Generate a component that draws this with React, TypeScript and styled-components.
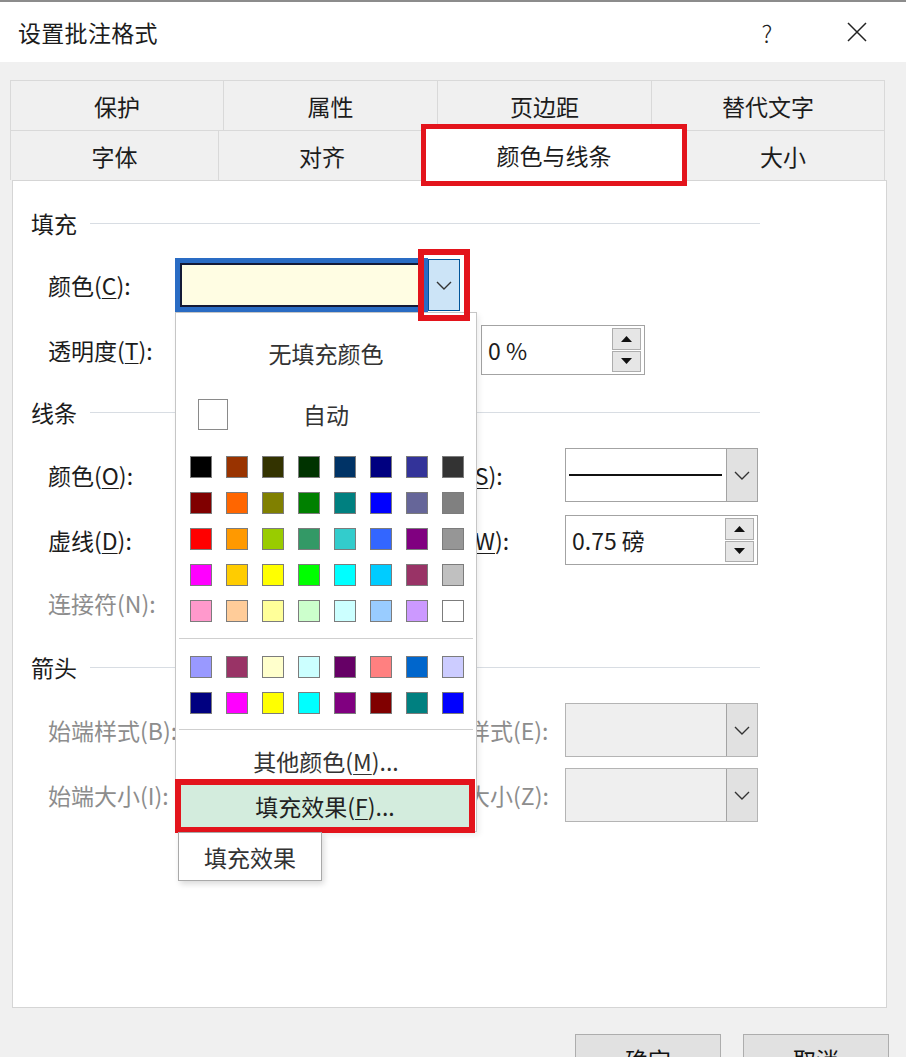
import styled, { createGlobalStyle } from "styled-components";

const GlobalStyle = createGlobalStyle`
  html, body {
    margin: 0;
    padding: 0;
    background: #f0f0f0;
    overflow: hidden;
  }
  * {
    box-sizing: border-box;
  }
  body {
    font-family: "Noto Sans CJK SC", "Noto Sans", sans-serif;
    color: #1c1c1c;
  }
`;

const Window = styled.div`
  width: 906px;
  height: 1057px;
  overflow: hidden;
  background: #f0f0f0;
  border-top: 2px solid #8c8c8c;
`;

const TitleBar = styled.div`
  height: 60px;
  background: #fff;
  display: flex;
  align-items: center;
  padding: 0 19px 0 18px;
  font-size: 23px;
`;

const TitleText = styled.div`
  flex: 1;
  letter-spacing: 0.3px;
`;

const TitleButton = styled.div<{ $w: number }>`
  width: ${(p) => p.$w}px;
  height: 44px;
  display: flex;
  align-items: center;
  justify-content: center;
  font-size: 24px;
  font-weight: 300;
  color: #222;
`;

const Body = styled.div`
  padding: 18px 0 0 10px;
`;

const TabRow = styled.div`
  display: flex;
  height: 50px;
  width: 875px;
`;

const Tab = styled.div<{ $w: number; $active?: boolean }>`
  width: ${(p) => p.$w}px;
  display: flex;
  align-items: center;
  justify-content: center;
  font-size: 23px;
  border-top: 1px solid #d9d9d9;
  border-right: 1px solid #d9d9d9;
  &:first-child {
    border-left: 1px solid #d9d9d9;
  }
  ${(p) =>
    p.$active &&
    `
    position: relative;
    z-index: 3;
    background: #fff;
    height: 52px;
    margin-top: -1px;
    border: none;
    outline: 5px solid #e3141c;
  `}
`;

const Panel = styled.div`
  position: relative;
  margin-left: 2px;
  width: 875px;
  height: 828px;
  background: #fff;
  border: 1px solid #d5d5d5;
  padding-left: 18px;
`;

const Header = styled.div<{ $mt: number }>`
  margin-top: ${(p) => p.$mt}px;
  width: 729px;
  height: 30px;
  display: flex;
  align-items: center;
  font-size: 23px;
`;

const Rule = styled.div`
  flex: 1;
  height: 1px;
  margin-left: 13px;
  background: #d8dde3;
`;

const Row = styled.div<{ $mt: number }>`
  margin-top: ${(p) => p.$mt}px;
  height: 54px;
  display: flex;
  align-items: center;
  padding-left: 17px;
`;

const Label = styled.div<{ $w: number; $muted?: boolean }>`
  width: ${(p) => p.$w}px;
  flex: none;
  font-size: 23px;
  white-space: nowrap;
  color: ${(p) => (p.$muted ? "#8d8d8d" : "#1c1c1c")};
`;

const Key = styled.span`
  text-decoration: underline;
  text-underline-offset: 3px;
  text-decoration-thickness: 1px;
`;

const Spacer = styled.div<{ $w: number }>`
  width: ${(p) => p.$w}px;
  flex: none;
`;

/* ---------- fill colour combo ---------- */

const ComboWrap = styled.div`
  position: relative;
  display: flex;
  align-items: stretch;
  height: 54px;
`;

const FocusField = styled.div`
  width: 253px;
  background: #2a6cc4;
  padding: 5px;
  display: flex;
`;

const FieldInner = styled.div`
  flex: 1;
  border: 2px solid #141a36;
  background: #fffde3;
`;

const DropBtn = styled.div`
  width: 32px;
  margin: 1px 0 1px 0;
  background: #cce4f7;
  border: 1px solid #005499;
  display: flex;
  align-items: center;
  justify-content: center;
  outline: 6px solid #e3141c;
  outline-offset: 4px;
  position: relative;
  z-index: 6;
`;

/* ---------- popup palette ---------- */

const Popup = styled.div`
  position: absolute;
  top: 100%;
  left: 0;
  width: 302px;
  z-index: 5;
  background: #fff;
  border: 1px solid #c6c6c6;
  padding: 8px 0 4px;
  box-shadow: 2px 3px 6px rgba(0, 0, 0, 0.08);
`;

const MenuText = styled.div<{ $h: number; $pt?: number }>`
  height: ${(p) => p.$h}px;
  padding-top: ${(p) => p.$pt ?? 0}px;
  display: flex;
  align-items: center;
  justify-content: center;
  font-size: 23px;
  color: #333;
  white-space: nowrap;
`;

const AutoRow = styled.div`
  height: 58px;
  display: flex;
  align-items: center;
  padding-left: 22px;
`;

const AutoBox = styled.div`
  width: 30px;
  height: 31px;
  border: 1px solid #8a8a8a;
  background: #fff;
`;

const AutoText = styled.div`
  flex: 1;
  text-align: center;
  padding-right: 52px;
  font-size: 23px;
  color: #333;
`;

const Palette = styled.div<{ $mt: number }>`
  margin-top: ${(p) => p.$mt}px;
  padding-left: 7px;
  display: grid;
  grid-template-columns: repeat(8, 36px);
  grid-auto-rows: 36px;
`;

const Cell = styled.div`
  display: flex;
  align-items: center;
  justify-content: center;
`;

const Swatch = styled.div`
  width: 22px;
  height: 22px;
  border: 1px solid #7c7c7c;
`;

const MenuSep = styled.div<{ $mt: number }>`
  margin: ${(p) => p.$mt}px 3px 0;
  height: 1px;
  background: #cfcfcf;
`;

const FillEffects = styled.div`
  margin: 0 7px 0 5px;
  height: 42px;
  background: #d3ecdd;
  outline: 6px solid #e3141c;
  display: flex;
  align-items: center;
  justify-content: center;
  font-size: 23px;
  color: #222;
`;

const Tooltip = styled.div`
  position: absolute;
  top: calc(100% + 1px);
  left: 2px;
  width: 144px;
  height: 49px;
  background: #fff;
  border: 1px solid #a9a9a9;
  box-shadow: 2px 3px 6px rgba(0, 0, 0, 0.15);
  display: flex;
  align-items: center;
  justify-content: center;
  font-size: 23px;
  color: #333;
`;

/* ---------- spinners and combos ---------- */

const Spin = styled.div<{ $w: number }>`
  width: ${(p) => p.$w}px;
  height: 50px;
  border: 1px solid #a3a3a3;
  background: #fff;
  display: flex;
  align-items: center;
  padding: 2px 3px 2px 6px;
  font-family: "Noto Sans", "Noto Sans CJK SC", sans-serif;
`;

const SpinValue = styled.div`
  flex: 1;
  font-size: 23px;
  color: #1c1c1c;
  font-family: "Noto Sans CJK SC", sans-serif;
`;

const SpinBtns = styled.div`
  width: 29px;
  height: 100%;
  display: flex;
  flex-direction: column;
  gap: 1px;
`;

const SpinBtn = styled.div`
  flex: 1;
  background: #e6e6e6;
  border: 1px solid #adadad;
  display: flex;
  align-items: center;
  justify-content: center;
`;

const Combo = styled.div<{ $disabled?: boolean }>`
  width: 193px;
  height: 54px;
  border: 1px solid ${(p) => (p.$disabled ? "#b4b4b4" : "#a3a3a3")};
  background: ${(p) => (p.$disabled ? "#efefef" : "#fff")};
  display: flex;
`;

const ComboField = styled.div`
  flex: 1;
  display: flex;
  align-items: center;
  padding: 0 4px 0 3px;
`;

const LineSample = styled.div`
  flex: 1;
  height: 2px;
  background: #111;
`;

const ComboBtn = styled.div`
  width: 31px;
  background: #e1e1e1;
  border-left: 1px solid #a3a3a3;
  display: flex;
  align-items: center;
  justify-content: center;
`;

/* ---------- footer ---------- */

const Footer = styled.div`
  display: flex;
  justify-content: flex-end;
  gap: 22px;
  padding: 26px 17px 0 0;
`;

const Button = styled.div`
  width: 146px;
  height: 50px;
  background: #e1e1e1;
  border: 1px solid #adadad;
  display: flex;
  align-items: center;
  justify-content: center;
  font-size: 23px;
  color: #111;
`;

/* ---------- icons ---------- */

const Chevron = () => (
  <svg width="16" height="9" viewBox="0 0 16 9">
    <polyline points="1,1 8,8 15,1" fill="none" stroke="#333" strokeWidth="1.4" />
  </svg>
);

const Tri = ({ up }: { up?: boolean }) => (
  <svg width="11" height="6" viewBox="0 0 11 6">
    <polygon points={up ? "0,6 5.5,0 11,6" : "0,0 5.5,6 11,0"} fill="#111" />
  </svg>
);

const CloseIcon = () => (
  <svg width="20" height="20" viewBox="0 0 20 20">
    <path d="M1 1 L19 19 M19 1 L1 19" stroke="#222" strokeWidth="1.5" fill="none" />
  </svg>
);

const mainColors = [
  "#000000", "#993300", "#333300", "#003300", "#003366", "#000080", "#333399", "#333333",
  "#800000", "#FF6600", "#808000", "#008000", "#008080", "#0000FF", "#666699", "#808080",
  "#FF0000", "#FF9900", "#99CC00", "#339966", "#33CCCC", "#3366FF", "#800080", "#969696",
  "#FF00FF", "#FFCC00", "#FFFF00", "#00FF00", "#00FFFF", "#00CCFF", "#993366", "#C0C0C0",
  "#FF99CC", "#FFCC99", "#FFFF99", "#CCFFCC", "#CCFFFF", "#99CCFF", "#CC99FF", "#FFFFFF",
];

const recentColors = [
  "#9999FF", "#993366", "#FFFFCC", "#CCFFFF", "#660066", "#FF8080", "#0066CC", "#CCCCFF",
  "#000080", "#FF00FF", "#FFFF00", "#00FFFF", "#800080", "#800000", "#008080", "#0000FF",
];

const Spinner = ({ value, w }: { value: string; w: number }) => (
  <Spin $w={w}>
    <SpinValue>{value}</SpinValue>
    <SpinBtns>
      <SpinBtn>
        <Tri up />
      </SpinBtn>
      <SpinBtn>
        <Tri />
      </SpinBtn>
    </SpinBtns>
  </Spin>
);

export default function App() {
  return (
    <>
      <GlobalStyle />
      <Window>
        <TitleBar>
          <TitleText>设置批注格式</TitleText>
          <TitleButton $w={46}>?</TitleButton>
          <TitleButton $w={37} />
          <TitleButton $w={60}>
            <CloseIcon />
          </TitleButton>
        </TitleBar>

        <Body>
          <TabRow>
            <Tab $w={214}>保护</Tab>
            <Tab $w={214}>属性</Tab>
            <Tab $w={214}>页边距</Tab>
            <Tab $w={233}>替代文字</Tab>
          </TabRow>
          <TabRow>
            <Tab $w={209}>字体</Tab>
            <Tab $w={207}>对齐</Tab>
            <Tab $w={256} $active>
              颜色与线条
            </Tab>
            <Tab $w={203}>大小</Tab>
          </TabRow>

          <Panel>
            <Header $mt={27}>
              填充
              <Rule />
            </Header>
            <Row $mt={20}>
              <Label $w={127}>
                颜色(<Key>C</Key>):
              </Label>
              <ComboWrap>
                <FocusField>
                  <FieldInner />
                </FocusField>
                <DropBtn>
                  <Chevron />
                </DropBtn>
                <Popup>
                  <MenuText $h={64}>无填充颜色</MenuText>
                  <AutoRow>
                    <AutoBox />
                    <AutoText>自动</AutoText>
                  </AutoRow>
                  <Palette $mt={6}>
                    {mainColors.map((c, i) => (
                      <Cell key={i}>
                        <Swatch style={{ background: c }} />
                      </Cell>
                    ))}
                  </Palette>
                  <MenuSep $mt={9} />
                  <Palette $mt={10}>
                    {recentColors.map((c, i) => (
                      <Cell key={i}>
                        <Swatch style={{ background: c }} />
                      </Cell>
                    ))}
                  </Palette>
                  <MenuSep $mt={8} />
                  <MenuText $h={55} $pt={6}>
                    其他颜色(<Key>M</Key>)...
                  </MenuText>
                  <FillEffects>
                    填充效果(<Key>F</Key>)...
                  </FillEffects>
                  <Tooltip>填充效果</Tooltip>
                </Popup>
              </ComboWrap>
            </Row>
            <Row $mt={11}>
              <Label $w={127}>
                透明度(<Key>T</Key>):
              </Label>
              <Spacer $w={306} />
              <Spinner value="0 %" w={164} />
            </Row>

            <Header $mt={20}>
              线条
              <Rule />
            </Header>
            <Row $mt={21}>
              <Label $w={127}>
                颜色(<Key>O</Key>):
              </Label>
              <Spacer $w={246} />
              <Label $w={144}>
                线型(<Key>S</Key>):
              </Label>
              <Combo>
                <ComboField>
                  <LineSample />
                </ComboField>
                <ComboBtn>
                  <Chevron />
                </ComboBtn>
              </Combo>
            </Row>
            <Row $mt={11}>
              <Label $w={127}>
                虚线(<Key>D</Key>):
              </Label>
              <Spacer $w={246} />
              <Label $w={144}>
                粗细(<Key>W</Key>):
              </Label>
              <Spinner value="0.75 磅" w={193} />
            </Row>
            <Row $mt={9}>
              <Label $w={160} $muted>
                连接符(N):
              </Label>
            </Row>

            <Header $mt={22}>
              箭头
              <Rule />
            </Header>
            <Row $mt={21}>
              <Label $w={127} $muted>
                始端样式(B):
              </Label>
              <Spacer $w={246} />
              <Label $w={144} $muted>
                末端样式(E):
              </Label>
              <Combo $disabled>
                <ComboField />
                <ComboBtn>
                  <Chevron />
                </ComboBtn>
              </Combo>
            </Row>
            <Row $mt={11}>
              <Label $w={127} $muted>
                始端大小(I):
              </Label>
              <Spacer $w={246} />
              <Label $w={144} $muted>
                末端大小(Z):
              </Label>
              <Combo $disabled>
                <ComboField />
                <ComboBtn>
                  <Chevron />
                </ComboBtn>
              </Combo>
            </Row>
          </Panel>

          <Footer>
            <Button>确定</Button>
            <Button>取消</Button>
          </Footer>
        </Body>
      </Window>
    </>
  );
}
